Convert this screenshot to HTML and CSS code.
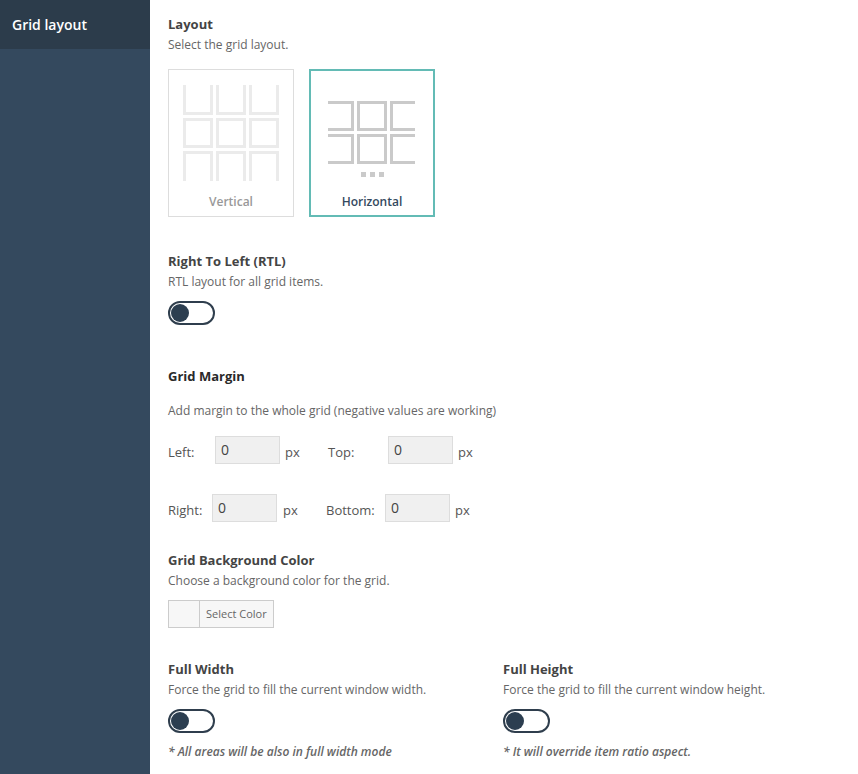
FILE: index.html
```html
<!DOCTYPE html>
<html lang="en">
<head>
<meta charset="utf-8">
<title>Grid layout</title>
<link rel="stylesheet" href="styles.css">
</head>
<body>
<div class="app">
  <nav class="sidebar"><div class="tab">Grid layout</div></nav>
  <main class="content">
    <section class="block layout">
      <h3>Layout</h3>
      <p>Select the grid layout.</p>
      <div class="cards">
        <div class="card">
          <svg width="96" height="96" viewBox="0 0 96 96" fill="none" stroke="#ebebeb" stroke-width="3">
            <path d="M1.5 0V28.5H28.5V0M34.5 0V28.5H61.5V0M67.5 0V28.5H94.5V0"/>
            <path d="M1.5 34.5H28.5V61.5H1.5ZM34.5 34.5H61.5V61.5H34.5ZM67.5 34.5H94.5V61.5H67.5Z"/>
            <path d="M1.5 96V67.5H28.5V96M34.5 96V67.5H61.5V96M67.5 96V67.5H94.5V96"/>
          </svg>
          <span>Vertical</span>
        </div>
        <div class="card selected">
          <svg width="96" height="96" viewBox="0 0 96 96" fill="none" stroke="#cacaca" stroke-width="3">
            <path d="M4 17.5H28.5V44.5H4M34.5 17.5H61.5V44.5H34.5ZM91 17.5H67.5V44.5H91"/>
            <path d="M4 50.5H28.5V77.5H4M34.5 50.5H61.5V77.5H34.5ZM91 50.5H67.5V77.5H91"/>
            <path d="M37 89.5H42M46 89.5H51M55 89.5H60" stroke-width="5"/>
          </svg>
          <span>Horizontal</span>
        </div>
      </div>
    </section>
    <section class="block rtl">
      <h3>Right To Left (RTL)</h3>
      <p>RTL layout for all grid items.</p>
      <div class="toggle"><i></i></div>
    </section>
    <section class="block margins">
      <h3>Grid Margin</h3>
      <p>Add margin to the whole grid (negative values are working)</p>
      <div class="fields top-row">
        <label>Left:</label><div class="input">0</div><span class="unit">px</span>
        <label>Top:</label><div class="input">0</div><span class="unit">px</span>
      </div>
      <div class="fields bottom-row">
        <label>Right:</label><div class="input">0</div><span class="unit">px</span>
        <label>Bottom:</label><div class="input">0</div><span class="unit">px</span>
      </div>
    </section>
    <section class="block background">
      <h3>Grid Background Color</h3>
      <p>Choose a background color for the grid.</p>
      <div class="picker"><span>Select Color</span></div>
    </section>
    <div class="columns">
      <section class="block">
        <h3>Full Width</h3>
        <p>Force the grid to fill the current window width.</p>
        <div class="toggle"><i></i></div>
        <em>* All areas will be also in full width mode</em>
      </section>
      <section class="block">
        <h3>Full Height</h3>
        <p>Force the grid to fill the current window height.</p>
        <div class="toggle"><i></i></div>
        <em>* It will override item ratio aspect.</em>
      </section>
    </div>
  </main>
</div>
</body>
</html>
```
FILE: styles.css
```css
* { box-sizing: border-box; }
body { margin: 0; background: #fff; font-family: "Open Sans", sans-serif; font-size: 12px; color: #666; }
.app { display: flex; height: 774px; overflow: hidden; }
.sidebar { width: 150px; background: #34495e; }
.tab { height: 49px; padding-left: 12px; background: #2c3c4b; color: #fff; font-size: 14px; font-weight: 600; line-height: 49px; }
.content { flex: 1; padding: 14px 0 0 18px; }
h3 { margin: 0; font-size: 13px; font-weight: 700; line-height: 20px; color: #444; }
p { margin: 1px 0 0; line-height: 20px; white-space: nowrap; }
.layout { height: 237px; }
.cards { display: flex; gap: 15px; margin-top: 14px; }
.card { display: flex; flex-direction: column; align-items: center; width: 126px; height: 148px; padding-top: 15px; border: 1px solid #ddd; color: #999; font-weight: 600; }
.card span { margin-top: 11px; line-height: 20px; }
.card.selected { padding-top: 14px; border: 2px solid #63bbb5; color: #34495e; }
.card svg { display: block; flex: none; }
.rtl { height: 115px; }
.toggle { width: 47px; height: 24px; margin-top: 9px; padding: 1px; border: 2px solid #2f3e4d; border-radius: 12px; }
.toggle i { display: block; width: 18px; height: 18px; border-radius: 50%; background: #2c3e50; }
.margins { height: 184px; }
.margins h3 { color: #2a2a2a; }
.margins p { margin-top: 15px; }
.fields { display: grid; height: 28px; font-size: 13px; color: #555; }
.top-row { grid-template-columns: 47px 65px 48px 60px 65px 40px; margin-top: 15px; }
.bottom-row { grid-template-columns: 44px 65px 49px 59px 65px 40px; margin-top: 30px; }
.fields label, .unit { line-height: 33px; }
.unit { padding-left: 5px; }
.bottom-row .unit:nth-child(3) { padding-left: 6px; }
.input { height: 28px; padding-left: 5px; border: 1px solid #ddd; background: #f0f0f0; color: #444; font-size: 14px; line-height: 26px; }
.background { height: 109px; }
.picker { width: 106px; height: 28px; margin-top: 9px; padding-left: 30px; border: 1px solid #ccc; background: #f7f7f7; }
.picker span { display: block; border-left: 1px solid #ccc; padding-left: 6px; font-size: 11px; line-height: 26px; }
.columns { display: grid; grid-template-columns: 335px 1fr; }
em { display: block; margin-top: 9px; font-weight: 600; line-height: 20px; white-space: nowrap; }
```
